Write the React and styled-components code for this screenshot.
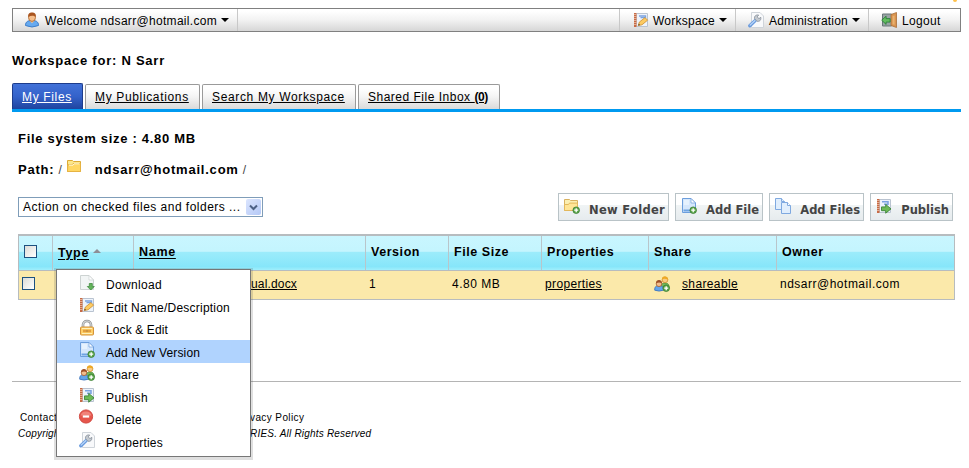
import React from 'react';
import styled, { createGlobalStyle, css } from 'styled-components';

const Global = createGlobalStyle`
  * { box-sizing: border-box; }
  body { margin: 0; background: #fff; color: #000; font: 12px/16px "Liberation Sans", Arial, sans-serif; }
`;

const Page = styled.div`
  position: relative;
  width: 969px;
  height: 468px;
  padding: 8px 8px 0 12px;
  overflow: hidden;
`;

const Spark = styled.span`
  position: absolute;
  left: 953px;
  top: 0;
  width: 4px;
  height: 2px;
  border-radius: 0 0 2px 2px;
  background: #ffc14a;
`;

const Toolbar = styled.nav`
  display: flex;
  width: 949px;
  height: 24px;
  border: 1px solid #808080;
  background: linear-gradient(#fff 10%, #f2f2f2 50%, #d6d6d6);
`;

const ToolItem = styled.a`
  display: flex;
  align-items: center;
  width: ${(p) => p.$width}px;
  padding-left: ${(p) => p.$pad}px;
  border-right: ${(p) => (p.$divided ? '1px solid #c8c8c8' : '0')};
  letter-spacing: ${(p) => p.$track}px;
  white-space: nowrap;
`;

const ToolText = styled.span`
  margin: 1px 4px 0 ${(p) => p.$gap || 4}px;
`;

const ToolSpace = styled.div`
  flex: 1;
  border-right: 1px solid #c8c8c8;
`;

const Caret = styled.i`
  border: 4px solid transparent;
  border-top-color: #000;
  border-bottom: 0;
`;

const IconBox = styled.svg`
  display: block;
  flex: none;
  width: 16px;
  height: 16px;
`;

const Title = styled.h1`
  margin: 21px 0 0;
  font-size: 13px;
  line-height: 16px;
  letter-spacing: 0.76px;
`;

const Tabs = styled.div`
  display: flex;
  align-items: flex-end;
  gap: 2px;
  width: 949px;
  height: 43px;
  border-bottom: 3px solid #009af0;
`;

const Tab = styled.a`
  width: ${(p) => p.$width}px;
  height: 25px;
  padding: 4px 0 0 9px;
  border: 1px solid #9a9a9a;
  border-bottom: 0;
  border-radius: 2px 2px 0 0;
  background: linear-gradient(#fff 15%, #f4f4f4 50%, #dadada);
  letter-spacing: ${(p) => p.$track ?? 0.65}px;
  text-decoration: underline;
  white-space: nowrap;
  b { letter-spacing: -0.4px; }
  ${(p) => p.$active && css`
    height: 26px;
    padding-top: 5px;
    border-color: #1d3c8c;
    background: linear-gradient(#4272d8, #3462ca 50%, #1f449f);
    color: #fff;
  `}
`;

const Content = styled.main`
  padding-left: 6px;
`;

const Strong = styled.div`
  display: flex;
  align-items: center;
  height: 16px;
  margin-top: ${(p) => p.$top}px;
  font-size: 13px;
  font-weight: bold;
  letter-spacing: ${(p) => p.$track}px;
`;

const Slash = styled.span`
  margin: 0 4px;
  color: #444;
  font-size: 12px;
  font-weight: normal;
  letter-spacing: 0;
`;

const PathFolder = styled.span`
  margin: -8px 13px 0 0;
`;

const Controls = styled.div`
  display: flex;
  justify-content: space-between;
  align-items: flex-start;
  width: 935px;
  margin-top: 15px;
`;

const Select = styled.div`
  display: flex;
  align-items: center;
  justify-content: space-between;
  width: 245px;
  height: 20px;
  margin-top: 4px;
  padding: 0 1px 0 4px;
  border: 1px solid #7f9db9;
  letter-spacing: 0.48px;
  white-space: nowrap;
`;

const SelectArrow = styled.span`
  display: grid;
  place-items: center;
  width: 15px;
  height: 16px;
  border-radius: 2px;
  background: linear-gradient(135deg, #dbe5fe, #b4c8f6);
`;

const Buttons = styled.div`
  display: flex;
  gap: 6px;
`;

const Button = styled.button`
  display: flex;
  align-items: flex-start;
  justify-content: space-between;
  width: ${(p) => p.$width}px;
  height: 28px;
  padding: 4px 3px 0 5px;
  border: 1px solid #b9c3c7;
  background: linear-gradient(#fff 0, #fff 42%, #f0f4f5 43%, #e6ebee);
  color: #444;
  font: bold 11.5px/16px "DejaVu Sans", Verdana, sans-serif;
  letter-spacing: ${(p) => p.$track}px;
  white-space: nowrap;
  span { margin-top: 4px; }
`;

const Table = styled.div`
  width: 937px;
  margin-top: 13px;
  border: 1px solid #b7bcbf;
  border-top-width: 2px;
`;

const Columns = styled.div`
  display: grid;
  grid-template-columns: 34px 81px 232px 83px 93px 107px 128px 1fr;
`;

const Head = styled(Columns)`
  height: 35px;
  border-bottom: 1px solid #b7bcbf;
  background: linear-gradient(#c9f6ff 0, #c4f5fe 45%, #9cecfb 48%, #86e6fa 90%, #a0effc);
  font-size: 12.5px;
  font-weight: bold;
`;

const HeadCell = styled.div`
  display: flex;
  align-items: center;
  padding: 0 0 ${(p) => p.$lift ?? 2}px 5px;
  border-right: 1px solid #b9c5ca;
  letter-spacing: ${(p) => p.$track ?? 0.55}px;
  &:last-child { border-right: 0; }
  u { text-underline-offset: 2px; }
`;

const SortUp = styled.i`
  margin: -4px 0 0 4px;
  border: 4px solid transparent;
  border-bottom-color: #8e8e96;
  border-top: 0;
`;

const Row = styled(Columns)`
  height: 28px;
  background: #fbe9aa;
`;

const Cell = styled.div`
  display: flex;
  align-items: center;
  padding: 0 0 3px ${(p) => p.$pad || 0}px;
  letter-spacing: ${(p) => p.$track ?? 0.5}px;
  svg { margin-right: 12px; }
`;

const Check = styled.span`
  width: 13px;
  height: 13px;
  border: 1px solid #1c5180;
  background: linear-gradient(135deg, #dcdcd7, #fff);
`;

const Footer = styled.footer`
  width: 949px;
  margin-top: 81px;
  padding: 28px 0 0 6px;
  border-top: 1px solid #b4b4b4;
  font-size: 10px;
`;

const FootLine = styled.div`
  display: grid;
  grid-template-columns: ${(p) => p.$first}px 1fr;
  height: 16px;
  padding-left: ${(p) => p.$pad}px;
  font-style: ${(p) => (p.$italic ? 'italic' : 'normal')};
  letter-spacing: ${(p) => p.$track}px;
  white-space: nowrap;
`;

const Menu = styled.div`
  position: absolute;
  left: 56px;
  top: 269px;
  width: 195px;
  height: 188px;
  padding-top: 2.5px;
  border: 1px solid #777;
  background: #fff;
  box-shadow: 0 1px 0 2px rgba(80, 80, 80, 0.18);
`;

const MenuItem = styled.div`
  display: flex;
  height: 22.5px;
  padding: 3px 0 0 22px;
  background: ${(p) => (p.$active ? '#b0d3fe' : 'transparent')};
  letter-spacing: ${(p) => p.$track}px;
  white-space: nowrap;
  svg { margin-top: -1px; }
  span { margin: 1.5px 0 0 11px; }
`;

const Plus = () => (
  <g>
    <circle cx="12.2" cy="12.2" r="3.3" fill="#5da74b" stroke="#34782d" strokeWidth=".7" />
    <path d="M12.2 10.2v4M10.2 12.2h4" stroke="#fff" strokeWidth="1.3" />
  </g>
);

const PageShape = ({ edge, fill }) => (
  <path d="M1.5 .5h8.5l4.5 4.5v9.5h-13z" fill={fill} stroke={edge} />
);

const Notebook = () => (
  <g>
    <path d="M3.5 1.5h11v13h-11z" fill="#edf3fb" stroke="#b9c3d0" />
    <path d="M1 1h2.5v14H1z" fill="#c76a45" />
    <path d="M1 2.5h2.5M1 4.5h2.5M1 6.5h2.5M1 8.5h2.5M1 10.5h2.5M1 12.5h2.5" stroke="#f2cbb5" strokeWidth=".7" />
  </g>
);

const glyphs = {
  user: (
    <g>
      <path d="M1.5 13.5c0-4 2.5-5 6.5-5s6.5 1 6.5 5q-6.5 3-13 0z" fill="#66aaf0" stroke="#3f7dc8" />
      <path d="M6 9l2 2.2L10 9" fill="#f3c393" />
      <ellipse cx="8" cy="5.4" rx="3.5" ry="4" fill="#f5bf8c" stroke="#a95f26" strokeWidth=".8" />
      <path d="M4.2 5C4 1.6 5.5.6 8 .6s4.2 1 3.8 4.4C10 3.5 7 3.3 4.2 5z" fill="#a9551f" />
    </g>
  ),
  edit: (
    <g>
      <Notebook />
      <path d="M6 4h6.5v1.6h-5" fill="none" stroke="#7ba3e0" strokeWidth="1.4" />
      <path d="M5.2 13.6l1.2-3.6 5.6-4.4 2.6 2.6-5.6 4.6z" fill="#fccb62" stroke="#cc8d30" strokeWidth=".8" />
      <path d="M5.2 13.6l.6-1.8 1.3 1.3z" fill="#4a3d34" />
    </g>
  ),
  wrench: (
    <g>
      <path d="M3.5.5H12L15.5 4v11.5h-12z" fill="#f8f9fb" stroke="#cfd4da" />
      <path d="M1.8 13.8L7.4 8.4" stroke="#6799dd" strokeWidth="3.4" strokeLinecap="round" />
      <path d="M2.2 13L7 8.5" stroke="#b3d2f8" strokeWidth="1.4" strokeLinecap="round" />
      <path d="M6.6 6.8l2.3 2.4c2.5.7 4.4-1 3.9-3.9L11 6.6 9.1 4.9l1.6-1.8C8 2.4 5.9 4.3 6.6 6.8z" fill="#c3c9d0" stroke="#8d959e" strokeWidth=".9" />
    </g>
  ),
  logout: (
    <g>
      <path d="M1.5 2h9v12h-9z" fill="#98a3a4" stroke="#687778" />
      <path d="M10 2.5L15.5.5v15L10 13.5z" fill="#d99450" stroke="#a86f38" strokeWidth=".8" />
      <path d="M11.6 4l2-.6v9.4l-2-.6z" fill="#e9b271" />
      <path d="M.7 8.2l4.4-4v2.4h4v3.5h-4v2.3z" fill="#63bd5f" stroke="#237b32" strokeWidth=".8" />
    </g>
  ),
  folder: (
    <g>
      <path d="M1.5 2.5h5l1 1h7v10h-13z" fill="#fce78b" stroke="#ddaa35" />
      <path d="M1.5 13.5l.3-6.7h4.3l1-1.3h7.4v8z" fill="#ffd763" stroke="#e6b343" />
      <path d="M3 7.2h4l1-1.4h5.5" stroke="#fff9d5" fill="none" />
    </g>
  ),
  newFolder: (
    <g>
      <path d="M.5 1.5h5l1 1h7v10H.5z" fill="#fbefb2" stroke="#d8b160" />
      <path d="M.5 12.5V6.5h4l1-1.4h8v7.4z" fill="#ffe596" stroke="#e3b85b" />
      <Plus />
    </g>
  ),
  addFile: (
    <g>
      <PageShape edge="#6c9edc" fill="#d5e7fc" />
      <path d="M10 .5V5h4.5z" fill="#fff" stroke="#6c9edc" strokeWidth=".7" />
      <path d="M2.5 11.5h10v2h-10z" fill="#6ea3e2" />
      <path d="M3 2h5v5H3z" fill="#e6f2fe" />
      <Plus />
    </g>
  ),
  files: (
    <g fill="#e0eefd" stroke="#7fa9e0">
      <path d="M.5.5h6l3 3v8h-9z" />
      <path d="M6.5.5v3h3" />
      <path d="M6.5 4.5h6l3 3v8h-9z" />
      <path d="M12.5 4.5v3h3" fill="#fff" />
    </g>
  ),
  publish: (
    <g>
      <Notebook />
      <path d="M6 3.8h6v2.5H8" fill="none" stroke="#7ba3e0" strokeWidth="1.5" />
      <path d="M5.5 8.9h4.2V6.4l5.3 4.5-5.3 4.3v-2.5H5.5z" fill="#6dbb57" stroke="#3b8438" strokeWidth=".9" />
    </g>
  ),
  download: (
    <g>
      <PageShape edge="#cdd3d2" fill="#f2f5f5" />
      <path d="M10 .5V5h4.5z" fill="#fff" stroke="#cdd3d2" strokeWidth=".7" />
      <path d="M10.3 8.5h3v3h2L11.8 15l-3.5-3.5h2z" fill="#63b45b" stroke="#438c42" strokeWidth=".8" />
    </g>
  ),
  lock: (
    <g>
      <path d="M4 8V4.8a4 3.8 0 018 0V8" fill="none" stroke="#8c8f90" strokeWidth="2.6" />
      <path d="M4 8V4.8a4 3.8 0 018 0V8" fill="none" stroke="#d9dbdb" strokeWidth="1.2" />
      <rect x="1.5" y="7" width="13" height="8" rx="1" fill="#ffcf66" stroke="#d3933c" />
      <path d="M3 8.5h10M3 13.5h10" stroke="#fff0b8" />
      <path d="M4 11h3M9 11h3" stroke="#e3a040" strokeWidth="2.4" />
      <path d="M8 9.8v2.4" stroke="#9b5c1c" />
    </g>
  ),
  share: (
    <g>
      <path d="M7 12c0-4 1.2-5 4-5s4.2 1.3 4.2 5z" fill="#76b95b" stroke="#448539" strokeWidth=".7" />
      <circle cx="11" cy="3.8" r="2.9" fill="#f8ca83" stroke="#c98724" strokeWidth=".7" />
      <path d="M8 3.4C8.3.5 9.4.4 11 .4s3 .6 3 3.4C12 2.8 10 2.5 8 3.4z" fill="#efa923" />
      <path d="M.7 14.2c0-3.5 1-4.5 4.3-4.5s4.5 1 4.5 4.5q-4.5 1.8-8.8 0z" fill="#63a5ea" stroke="#376fb8" strokeWidth=".8" />
      <circle cx="5" cy="7.8" r="2.8" fill="#f2bd8c" stroke="#a65f30" strokeWidth=".8" />
      <path d="M2 7.4c0-2.7 1.3-3.3 3-3.3s3 .6 3 3.3c-2-1.3-4-1.2-6 0z" fill="#9f5026" />
      <Plus />
    </g>
  ),
  remove: (
    <g transform="translate(-1 -1.5)">
      <circle cx="8" cy="8" r="6.6" fill="#e6564c" stroke="#d24a42" />
      <path d="M2.5 7a5.6 5 0 0111 0z" fill="#f0837a" />
      <path d="M4.8 8h6.4" stroke="#fff" strokeWidth="2.2" />
    </g>
  ),
};

const Icon = ({ name }) => <IconBox viewBox="0 0 16 16" overflow="visible">{glyphs[name]}</IconBox>;

const menuItems = [
  ['download', 'Download', 0.33],
  ['edit', 'Edit Name/Description', 0.22],
  ['lock', 'Lock & Edit', 0.12],
  ['addFile', 'Add New Version', 0.13],
  ['share', 'Share', 0.2],
  ['publish', 'Publish', 0.38],
  ['remove', 'Delete', 0.22],
  ['wrench', 'Properties', 0.23],
];

export default function App() {
  return (
    <Page>
      <Global />
      <Spark />
      <Toolbar>
        <ToolItem $width={225} $pad={11} $track={0.31} $divided>
          <Icon name="user" />
          <ToolText $gap={5}>Welcome ndsarr@hotmail.com</ToolText>
          <Caret />
        </ToolItem>
        <ToolSpace />
        <ToolItem $width={116} $pad={13} $track={0.24} $divided>
          <Icon name="edit" />
          <ToolText>Workspace</ToolText>
          <Caret />
        </ToolItem>
        <ToolItem $width={133} $pad={12} $track={0.21} $divided>
          <Icon name="wrench" />
          <ToolText $gap={5}>Administration</ToolText>
          <Caret />
        </ToolItem>
        <ToolItem $width={91} $pad={12} $track={0.35}>
          <Icon name="logout" />
          <ToolText $gap={5}>Logout</ToolText>
        </ToolItem>
      </Toolbar>

      <Title>Workspace for: N Sarr</Title>
      <Tabs>
        <Tab $width={71} $active>My Files</Tab>
        <Tab $width={115}>My Publications</Tab>
        <Tab $width={154}>Search My Workspace</Tab>
        <Tab $width={142} $track={0.5}>Shared File Inbox <b>(0)</b></Tab>
      </Tabs>

      <Content>
        <Strong $top={19} $track={0.7}>File system size : 4.80 MB</Strong>
        <Strong $top={15} $track={0.79}>
          Path:
          <Slash>/</Slash>
          <PathFolder><Icon name="folder" /></PathFolder>
          ndsarr@hotmail.com
          <Slash>/</Slash>
        </Strong>
        <Controls>
          <Select>
            Action on checked files and folders ...
            <SelectArrow>
              <svg width="9" height="7" viewBox="0 0 9 7">
                <path d="M1 1.5l3.5 3.5L8 1.5" fill="none" stroke="#4d6185" strokeWidth="2" />
              </svg>
            </SelectArrow>
          </Select>
          <Buttons>
            <Button $width={111} $track={0.3}><Icon name="newFolder" /><span>New Folder</span></Button>
            <Button $width={88} $track={0}><Icon name="addFile" /><span>Add File</span></Button>
            <Button $width={95} $track={0}><Icon name="files" /><span>Add Files</span></Button>
            <Button $width={83} $track={0}><Icon name="publish" /><span>Publish</span></Button>
          </Buttons>
        </Controls>

        <Table>
          <Head>
            <HeadCell $lift={4}><Check /></HeadCell>
            <HeadCell $track={0.7} $lift={1}><u>Type</u><SortUp /></HeadCell>
            <HeadCell $track={0.7}><u>Name</u></HeadCell>
            <HeadCell>Version</HeadCell>
            <HeadCell>File Size</HeadCell>
            <HeadCell>Properties</HeadCell>
            <HeadCell>Share</HeadCell>
            <HeadCell>Owner</HeadCell>
          </Head>
          <Row>
            <Cell $pad={3}><Check /></Cell>
            <Cell />
            <Cell $pad={117} $track={0.16}><u>ual.docx</u></Cell>
            <Cell $pad={3}>1</Cell>
            <Cell $pad={3}>4.80 MB</Cell>
            <Cell $pad={3} $track={0.36}><u>properties</u></Cell>
            <Cell $pad={5} $track={0.37}><Icon name="share" /><u>shareable</u></Cell>
            <Cell $pad={3}>ndsarr@hotmail.com</Cell>
          </Row>
        </Table>
      </Content>

      <Footer>
        <FootLine $pad={2} $first={230} $track={0.4}>
          <span>Contact</span>
          <span>vacy Policy</span>
        </FootLine>
        <FootLine $pad={0} $first={232} $track={0.2} $italic>
          <span>Copyright</span>
          <span>RIES. All Rights Reserved</span>
        </FootLine>
      </Footer>

      <Menu>
        {menuItems.map(([icon, label, track]) => (
          <MenuItem key={label} $track={track} $active={label === 'Add New Version'}>
            <Icon name={icon} />
            <span>{label}</span>
          </MenuItem>
        ))}
      </Menu>
    </Page>
  );
}
